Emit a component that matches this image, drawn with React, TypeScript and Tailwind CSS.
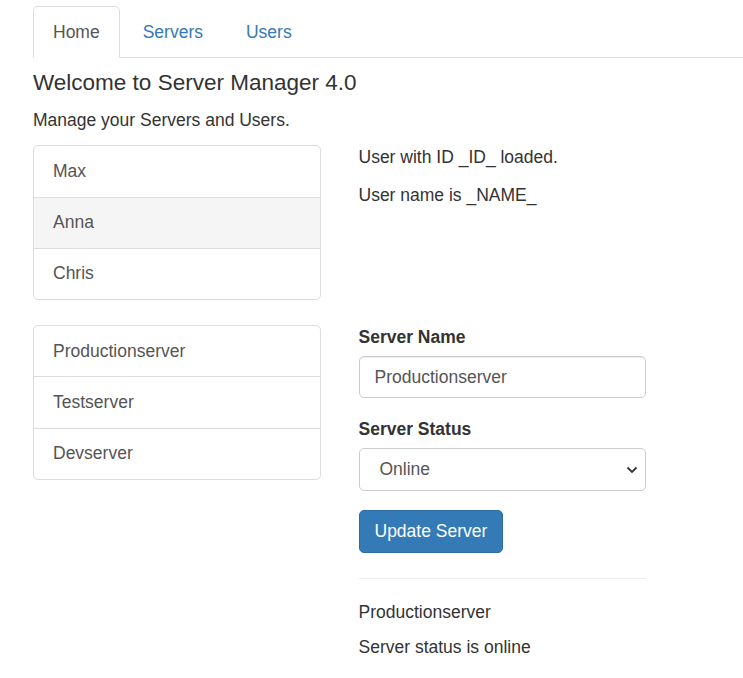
import React from "react";

export default function App() {
  const users = ["Max", "Anna", "Chris"];
  const servers = ["Productionserver", "Testserver", "Devserver"];
  return (
    <div className="min-h-screen bg-white pt-[6px] pl-[33px] font-['Liberation_Sans',Arial,sans-serif] text-[17.5px] leading-[25px] text-[#333]">
      <ul className="flex border-b border-[#ddd]">
        <li className="mr-[3px] -mb-px">
          <a className="block rounded-t-[5px] border border-[#ddd] border-b-transparent bg-white px-[19px] py-[12.5px] text-[#555]">
            Home
          </a>
        </li>
        <li className="mr-[3px] -mb-px">
          <a className="block rounded-t-[5px] border border-transparent px-[19px] py-[12.5px] text-[#337ab7]">
            Servers
          </a>
        </li>
        <li className="mr-[3px] -mb-px">
          <a className="block rounded-t-[5px] border border-transparent px-[19px] py-[12.5px] text-[#337ab7]">
            Users
          </a>
        </li>
      </ul>

      <h4 className="my-[12.5px] text-[22.5px] leading-[24.75px] font-normal">
        Welcome to Server Manager 4.0
      </h4>
      <p className="mb-[12.5px]">Manage your Servers and Users.</p>

      <div className="flex gap-[37.5px]">
        <div className="w-[288px] shrink-0">
          <div className="mb-[25px] flex flex-col">
            {users.map((u, i) => (
              <a
                key={u}
                className={
                  "block border border-[#ddd] px-[19px] py-[12.65px] text-[#555] " +
                  (i > 0 ? "-mt-px " : "") +
                  (i === 0 ? "rounded-t-[5px] " : "") +
                  (i === users.length - 1 ? "rounded-b-[5px] " : "") +
                  (u === "Anna" ? "bg-[#f5f5f5]" : "bg-white")
                }
              >
                {u}
              </a>
            ))}
          </div>
        </div>
        <div className="w-[288px] shrink-0">
          <p className="mb-[12.5px]">User with ID _ID_ loaded.</p>
          <p className="mb-[12.5px]">User name is _NAME_</p>
        </div>
      </div>

      <div className="flex gap-[37.5px]">
        <div className="w-[288px] shrink-0">
          <div className="mb-[25px] flex flex-col">
            {servers.map((s, i) => (
              <a
                key={s}
                className={
                  "block border border-[#ddd] bg-white px-[19px] py-[12.65px] text-[#555] " +
                  (i > 0 ? "-mt-px " : "") +
                  (i === 0 ? "rounded-t-[5px] " : "") +
                  (i === servers.length - 1 ? "rounded-b-[5px]" : "")
                }
              >
                {s}
              </a>
            ))}
          </div>
        </div>
        <div className="w-[287px] shrink-0">
          <div className="mb-[18.75px]">
            <label className="mb-[6.25px] inline-block font-bold">Server Name</label>
            <input
              readOnly
              value="Productionserver"
              className="block h-[42px] w-full rounded-[5px] border border-[#ccc] bg-white px-[15px] py-[7.5px] text-[17.5px] leading-[25px] text-[#555] outline-none shadow-[inset_0_1px_1px_rgba(0,0,0,0.075)]"
            />
          </div>
          <div className="mb-[18.75px]">
            <label className="mb-[6.25px] inline-block font-bold">Server Status</label>
            <div className="relative">
              <select
                defaultValue="online"
                className="block h-[43px] w-full appearance-none rounded-[5px] border border-[#ccc] bg-white pl-[20px] pr-[30px] text-[17.5px] leading-[25px] text-[#555] outline-none"
              >
                <option value="online">Online</option>
                <option value="offline">Offline</option>
              </select>
              <svg
                className="pointer-events-none absolute right-[8px] top-1/2 -translate-y-1/2"
                width="12"
                height="8"
                viewBox="0 0 12 8"
                fill="none"
              >
                <path d="M1.5 1.5 L6 6 L10.5 1.5" stroke="#333" strokeWidth="1.8" />
              </svg>
            </div>
          </div>
          <button className="h-[43px] rounded-[5px] border border-[#2e6da4] bg-[#337ab7] px-[15px] text-[17.5px] leading-[25px] text-white">
            Update Server
          </button>
          <hr className="mt-[25px] mb-[21px] border-0 border-t border-[#eee]" />
          <p className="mb-[10px]">Productionserver</p>
          <p className="mb-[12.5px]">Server status is online</p>
        </div>
      </div>
    </div>
  );
}
